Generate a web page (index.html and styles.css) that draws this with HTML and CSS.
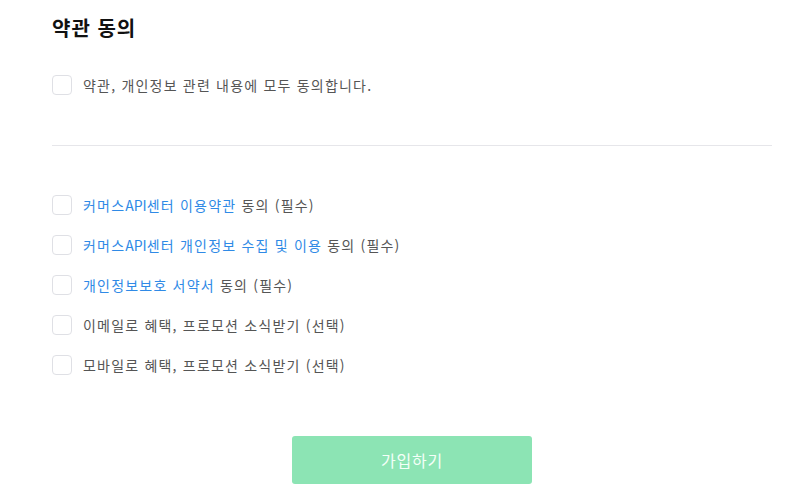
FILE: index.html
```html
<!DOCTYPE html>
<html lang="ko">
<head>
<meta charset="utf-8">
<link rel="stylesheet" href="styles.css">
</head>
<body>
<div class="wrap">
  <h2 class="title">약관 동의</h2>
  <label class="row all"><span class="box"></span><span class="txt">약관, 개인정보 관련 내용에 모두 동의합니다.</span></label>
  <hr class="divider">
  <div class="list">
    <label class="row"><span class="box"></span><span class="txt"><span class="link">커머스<span class="latin">API</span>센터 이용약관</span> 동의 (필수)</span></label>
    <label class="row"><span class="box"></span><span class="txt"><span class="link">커머스<span class="latin">API</span>센터 개인정보 수집 및 이용</span> 동의 (필수)</span></label>
    <label class="row"><span class="box"></span><span class="txt"><span class="link">개인정보보호 서약서</span> 동의 (필수)</span></label>
    <label class="row"><span class="box"></span><span class="txt">이메일로 혜택, 프로모션 소식받기 (선택)</span></label>
    <label class="row"><span class="box"></span><span class="txt">모바일로 혜택, 프로모션 소식받기 (선택)</span></label>
  </div>
  <div class="actions"><button class="submit">가입하기</button></div>
</div>
</body>
</html>
```
FILE: styles.css
```css
html, body { margin: 0; padding: 0; background: #fff; }
body { font-family: "Noto Sans CJK KR", "Noto Sans", sans-serif; color: #555; }
.wrap { width: 720px; padding: 0 28px 0 52px; }
.title { margin: 14px 0 0; font-size: 20px; line-height: 28px; font-weight: 700; color: #111; letter-spacing: 1px; }
.row { display: flex; align-items: center; height: 40px; gap: 11px; font-size: 14px; line-height: 20px; cursor: pointer; }
.all { margin-top: 23px; }
.box { width: 18px; height: 18px; border: 1px solid #dfe0e5; border-radius: 4px; flex: none; background: #fff; }
.txt { color: #555; letter-spacing: 1.2px; }
.latin { letter-spacing: 0; }
.link { color: #2f8ae6; }
.divider { margin: 40px 0 0; border: 0; border-top: 1px solid #e6e6ea; height: 0; }
.list { margin-top: 39px; display: flex; flex-direction: column; }
.actions { display: flex; justify-content: center; margin-top: 51px; }
.submit { width: 240px; height: 48px; border: 0; border-radius: 3px; background: #8ce4b4; color: #f4fff8; font-family: inherit; font-size: 16px; letter-spacing: 0.8px; }
```
